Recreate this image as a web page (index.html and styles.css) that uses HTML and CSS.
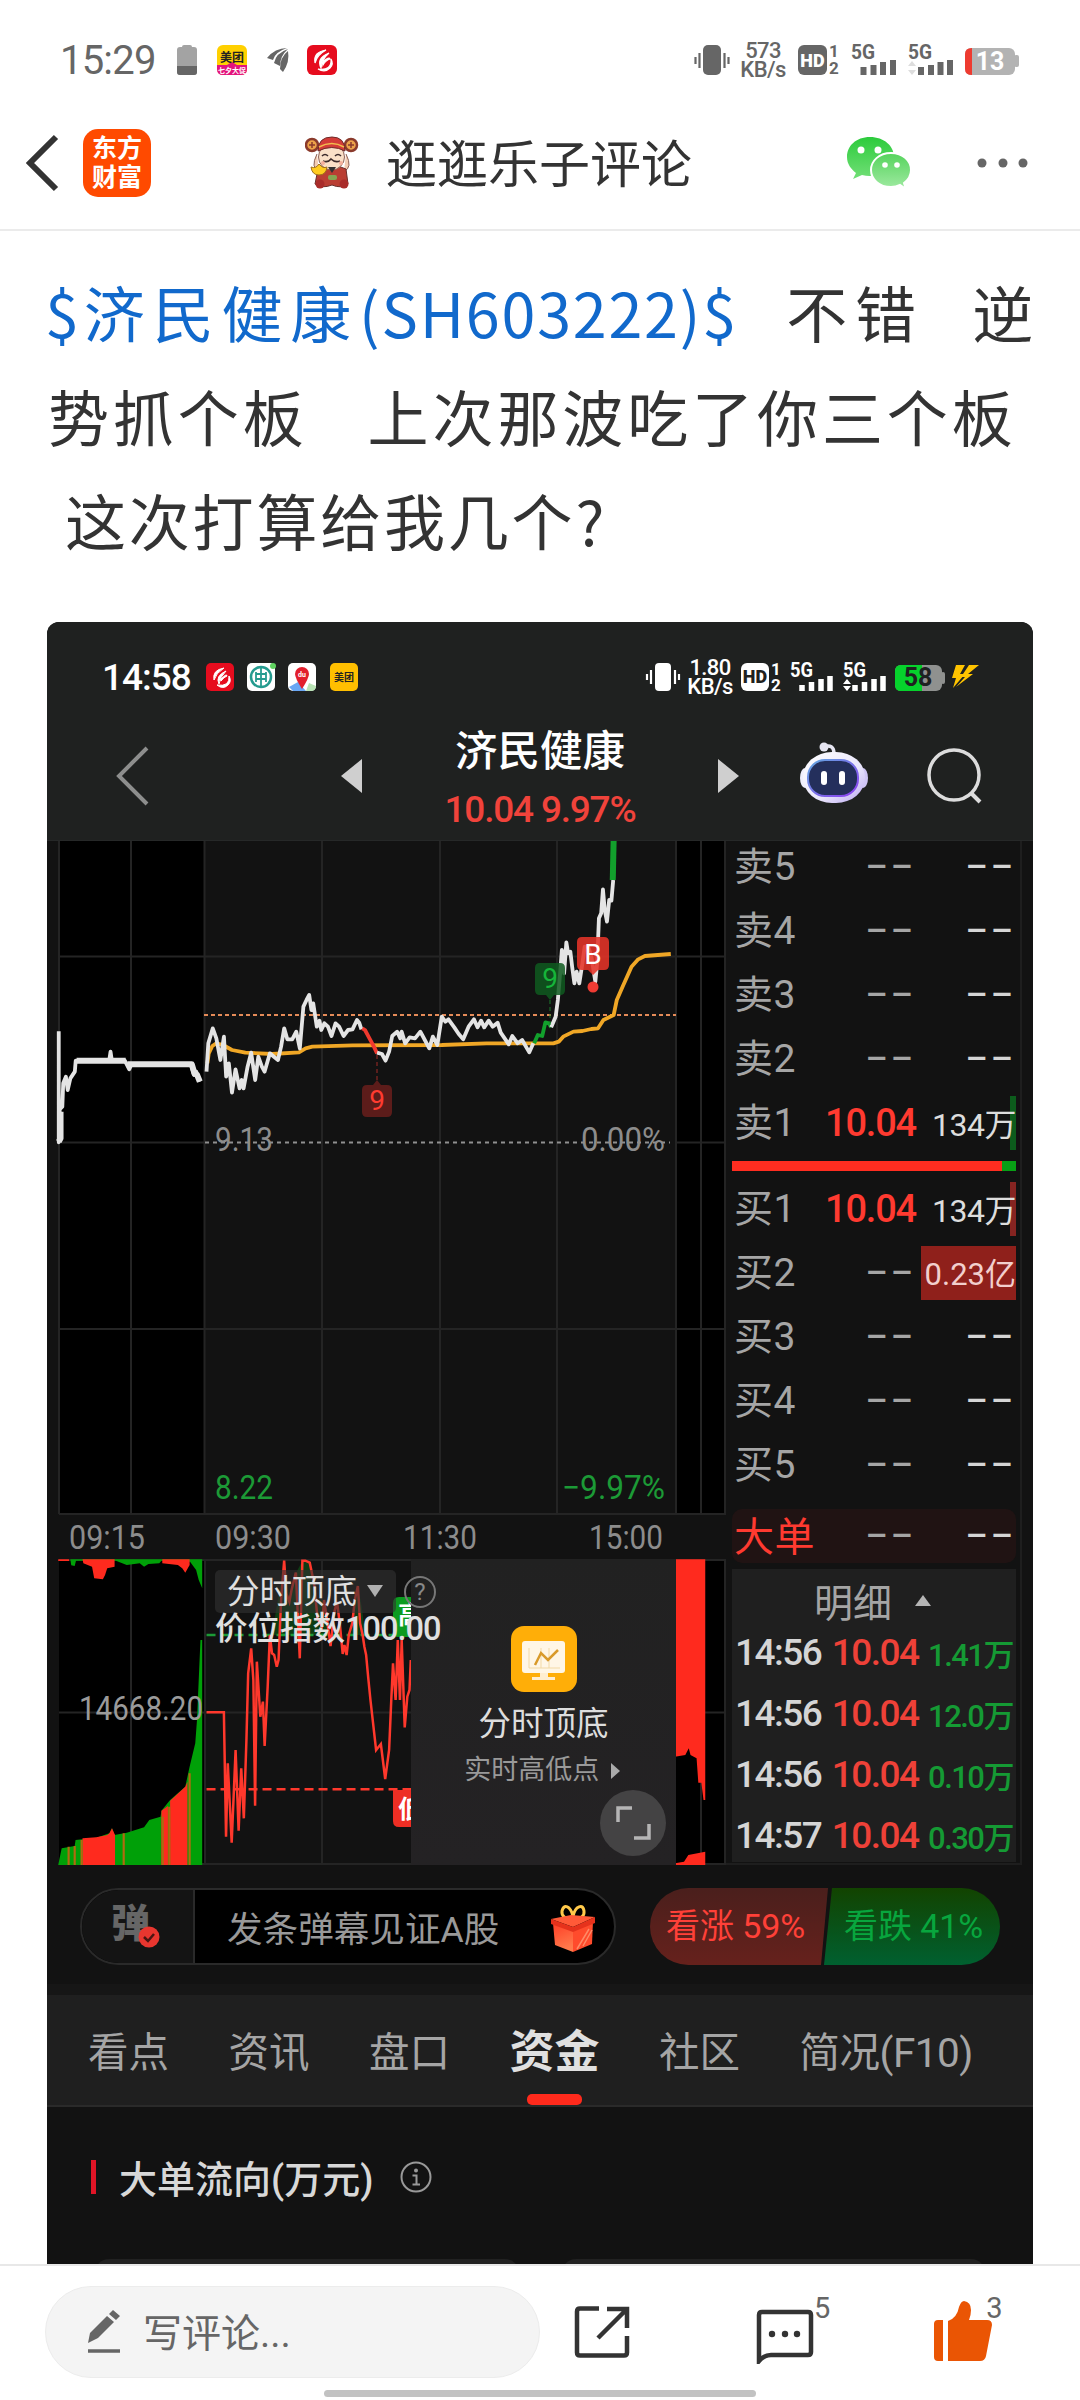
FILE: index.html
```html
<!DOCTYPE html>
<html lang="zh-CN">

<head>
    <meta charset="UTF-8">
    <meta name="viewport" content="width=device-width, initial-scale=1.0">
    <title>逛逛乐子评论</title>

    <link rel="stylesheet" href="styles.css">
</head>

<body>

    <div class="statusbar">
        <span class="clock">15:29</span>
        <svg class="notif" width="162" height="32" viewBox="0 0 162 32">
            <rect x="0" y="3" width="20" height="28" rx="3" fill="#a3a3a3" />
            <rect x="5" y="1" width="10" height="5" rx="2" fill="#a3a3a3" />
            <path d="M0 22h20v6q0 3-3 3H3q-3 0-3-3z" fill="#666" />
            <rect x="40" y="1" width="30" height="30" rx="6" fill="#ffd000" />
            <path d="M40 21h10l5-3 5 3h10v4q0 6-6 6H46q-6 0-6-6z" fill="#e3147c" />
            <text x="55" y="18" class="mini" fill="#222">美团</text>
            <text x="55" y="29" class="tiny" fill="#fff">七夕大促</text>
            <path d="M90 14Q98 4 110 4Q98 8 96 16zM97 19Q99 9 111 5Q103 12 103 22zM103 25Q103 13 111 7Q113 18 106 28z" fill="#666" />
            <rect x="130" y="1" width="30" height="30" rx="6" fill="#e60c1e" />
            <path d="M149 6Q136 8 138 19Q140 11 149 6zM152 9Q139 14 144 24Q145 15 152 9zM146 18q6-6 7-3q-4 1-7 6zM154 15Q155 27 141 25Q148 29 153 24Q157 20 154 15z" fill="#fff" stroke="#fff" stroke-width="1.200" />
        </svg>
        <div class="signals">
            <svg width="36" height="32" viewBox="0 0 36 32">
                <rect x="9" y="1" width="18" height="30" rx="5" fill="#666" />
                <path d="M1.500 13v7M5.500 9v15M30.500 9v15M34.500 13v7" stroke="#666" stroke-width="2.200" />
            </svg>
            <span class="speed">573<br>KB/s</span>
            <svg width="44" height="32" viewBox="0 0 44 32">
                <rect x="1" y="1" width="29" height="30" rx="6" fill="#666" />
                <text x="15.500" y="22.500" class="hd" fill="#fff">HD</text>
                <text x="37" y="13" class="simno" fill="#666">1</text>
                <text x="37" y="30" class="simno" fill="#666">2</text>
            </svg>
            <svg width="46" height="32" viewBox="0 0 46 32">
                <text x="0" y="15" class="g5" textLength="24" lengthAdjust="spacingAndGlyphs" fill="#666">5G</text>
                <path d="M12.500 31v-8M22.500 31v-10M32 31v-13M42 31v-15" stroke="#666" stroke-width="6" />
            </svg>
            <svg width="46" height="32" viewBox="0 0 46 32">
                <text x="0" y="15" class="g5" textLength="24" lengthAdjust="spacingAndGlyphs" fill="#666">5G</text>
                <path d="M4 17l4 5H0zM4 31l4-5H0z" fill="#ddd" />
                <path d="M13 31v-8M23 31v-10M32.500 31v-13M42 31v-15" stroke="#666" stroke-width="6" />
            </svg>
            <svg width="56" height="32" viewBox="0 0 56 32">
                <rect x="1" y="4" width="50" height="27" rx="6" fill="#b3b3b3" />
                <rect x="50" y="11" width="5" height="12" rx="2" fill="#b3b3b3" />
                <path d="M8 4v27q-7 0-7-6V10q0-6 7-6z" fill="#ee3b30" />
                <text x="26" y="26" class="batt" fill="#fff">13</text>
            </svg>
        </div>
    </div>

    <div class="header">
        <svg class="back" width="34" height="58" viewBox="0 0 34 58">
            <path d="M30 3L4 29l26 26" fill="none" stroke="#333" stroke-width="6" />
        </svg>
        <div class="logo">东方<br>财富</div>
        <svg class="mascot" width="54" height="54" viewBox="0 0 54 54">
            <g fill="#eda34a" stroke="#8a3a2c" stroke-width="2.500">
                <circle cx="7" cy="9" r="6" />
                <circle cx="46" cy="9" r="6" />
            </g>
            <path d="M4 9h6M7 6v6M43 9h6M46 6v6" stroke="#8a3a2c" stroke-width="1.500" />
            <path d="M12 18Q5 32 14 35M41 18Q48 32 39 35" fill="#f3cdb4" stroke="#8d6257" />
            <path d="M13 33Q27 26 41 33L43 48Q36 53 27 49Q17 53 10 48z" fill="#ba3e33" stroke="#69302c" />
            <circle cx="26.500" cy="21" r="13" fill="#fae0c7" stroke="#8d6257" />
            <path d="M13 15Q13 1 27 1Q40 1 40 15Q27 8 13 15z" fill="#d33c38" stroke="#6e2a28" />
            <path d="M14 11Q27 4 39 11" fill="none" stroke="#f2bd4d" stroke-width="1.500" />
            <path d="M17 20q3-3 6 0M30 20q3-3 6 0M18 25q5 2 8-2q4 4 9 2" fill="none" stroke="#3b2a2a" stroke-width="1.600" />
            <circle cx="18" cy="27" r="2" fill="#f5b09c" />
            <circle cx="36" cy="27" r="2" fill="#f5b09c" />
            <path d="M23 31h8l-4 6z" fill="#333" />
            <path d="M6 31q5 2 8-3q4 5 8 3q-1 8-8 8t-8-8z" fill="#ffcc20" stroke="#a1701b" />
            <rect x="23" y="39" width="9" height="5" rx="2" fill="#86a552" />
            <circle cx="15" cy="48" r="4.500" fill="#a92c2a" />
            <circle cx="39" cy="48" r="4.500" fill="#a92c2a" />
        </svg>
        <span class="title">逛逛乐子评论</span>
        <svg class="wechat" width="66" height="54" viewBox="0 0 66 54">
            <defs>
                <linearGradient id="wx1" x2="0" y2="1">
                    <stop offset="0" stop-color="#2ccb3c" />
                    <stop offset="1" stop-color="#72df77" />
                </linearGradient>
                <linearGradient id="wx2" x2="0" y2="1">
                    <stop offset="0" stop-color="#55d35c" />
                    <stop offset="1" stop-color="#a0eaa2" />
                </linearGradient>
            </defs>
            <path d="M24 1C10 1 1 10 1 21c0 7 4 12 9 16l-3 6 9-4q8 2 14 0c11-2 18-9 18-18C48 10 38 1 24 1z" fill="url(#wx1)" />
            <path d="M45 17C33 17 25 25 25 34s8 17 20 17q5 0 9-2l6 4-2-6c4-3 7-8 7-13 0-9-8-17-20-17z" fill="url(#wx2)" stroke="#fff" stroke-width="2" />
            <g fill="#fff">
                <circle cx="15" cy="14" r="3.500" />
                <circle cx="32" cy="14" r="3.500" />
                <circle cx="39" cy="29" r="2.800" />
                <circle cx="51" cy="29" r="2.800" />
            </g>
        </svg>
        <svg class="more" width="54" height="12" viewBox="0 0 54 12">
            <g fill="#666">
                <circle cx="7" cy="6" r="4.500" />
                <circle cx="28" cy="6" r="4.500" />
                <circle cx="48" cy="6" r="4.500" />
            </g>
        </svg>
    </div>

    <div class="post">
        <p class="line justified">
            <a class="stock"><span class="sign">$</span><span class="wide">济民健康</span>(SH603222)$</a>
            <span class="wide">不错</span>
            <span>逆</span>
        </p>
        <p class="line">势抓个板<span class="gap"></span>上次那波吃了你三个板</p>
        <p class="line indent">这次打算给我几个?</p>
    </div>

    <div class="shot">
        <div class="shot-status">
            <span class="clock">14:58</span>
            <svg class="notif" width="156" height="30" viewBox="0 0 156 30">
                <rect x="1" y="1" width="28" height="28" rx="5" fill="#e60c1e" />
                <path d="M19 6Q7 8 9 18Q11 11 19 6zM21 9Q10 14 14 22Q15 15 21 9zM16 17q6-6 6-3q-3 1-6 5zM24 14Q25 25 12 23Q18 28 23 23Q27 19 24 14z" fill="#fff" stroke="#fff" />
                <rect x="42" y="1" width="28" height="28" rx="5" fill="#fff" />
                <circle cx="56" cy="15" r="10" fill="none" stroke="#259b8f" stroke-width="2.500" />
                <path d="M56 5v20M51 10v10M61 10v10M51 12h10M51 17h10" stroke="#259b8f" stroke-width="1.800" />
                <circle cx="68" cy="4" r="3" fill="#5fd25f" />
                <rect x="83" y="1" width="28" height="28" rx="5" fill="#fff" />
                <path d="M84 25l9-5 8 9H88z" fill="#6aa7f4" />
                <path d="M101 29l3-8 7 3q0 5-5 5z" fill="#b9e3b5" />
                <path d="M97 27Q90 16 90 12a7 7 0 0 1 14 0Q104 16 97 27z" fill="#e21f2d" />
                <text x="97" y="15" class="tiny" fill="#fff">du</text>
                <rect x="125" y="1" width="28" height="28" rx="5" fill="#ffbf00" />
                <text x="139" y="19" class="mini small" fill="#222">美团</text>
            </svg>
            <div class="signals">
                <svg width="36" height="32" viewBox="0 0 36 32">
                    <rect x="10" y="2" width="16" height="28" rx="4" fill="#fff" />
                    <path d="M2 13v6M6 9v14M30 9v14M34 13v6" stroke="#fff" stroke-width="2.200" />
                </svg>
                <span class="speed">1.80<br>KB/s</span>
                <svg width="44" height="32" viewBox="0 0 44 32">
                    <rect x="1" y="2" width="28" height="28" rx="6" fill="#fff" />
                    <text x="15" y="22" class="hd" fill="#1f2120">HD</text>
                    <text x="36" y="14" class="simno" fill="#fff">1</text>
                    <text x="36" y="30" class="simno" fill="#fff">2</text>
                </svg>
                <svg width="46" height="32" viewBox="0 0 46 32">
                    <text x="0" y="16" class="g5" textLength="23" lengthAdjust="spacingAndGlyphs" fill="#fff">5G</text>
                    <path d="M12 30v-6M21.500 30v-9M31 30v-12M40 30v-15" stroke="#fff" stroke-width="5.500" />
                </svg>
                <svg width="46" height="32" viewBox="0 0 46 32">
                    <text x="0" y="16" class="g5" textLength="23" lengthAdjust="spacingAndGlyphs" fill="#fff">5G</text>
                    <path d="M4 18l4 5H0zM4 30l4-5H0z" fill="#fff" />
                    <path d="M12 30v-6M21.500 30v-9M31 30v-12M40 30v-15" stroke="#fff" stroke-width="5.500" />
                </svg>
                <svg width="88" height="32" viewBox="0 0 88 32">
                    <rect x="0" y="4" width="47" height="26" rx="6" fill="#8f918f" />
                    <rect x="46" y="11" width="4" height="12" rx="2" fill="#8f918f" />
                    <path d="M6 4h21v26H6q-6 0-6-6V10q0-6 6-6z" fill="#06d22c" />
                    <text x="23" y="25" class="batt" fill="#1f2120">58</text>
                    <path d="M61 4h9l-5 9h5L58 27l3-10h-4zM74 4h10L73 13h5L61 26l9-10h-4z" fill="#ffc400" />
                </svg>
            </div>
        </div>

        <div class="stock-head">
            <svg class="chev" width="36" height="60" viewBox="0 0 36 60">
                <path d="M32 2L4 30l28 28" fill="none" stroke="#8d8e8d" stroke-width="4" />
            </svg>
            <div class="tri left"></div>
            <div class="names">
                <span class="name">济民健康</span>
                <span class="quote">10.04 9.97%</span>
            </div>
            <div class="tri right"></div>
            <svg class="robot" width="70" height="66" viewBox="0 0 70 66">
                <defs>
                    <linearGradient id="rb" x2="1" y2="1">
                        <stop offset="0" stop-color="#fff" />
                        <stop offset="0.600" stop-color="#e9e6fb" />
                        <stop offset="1" stop-color="#b9a6f2" />
                    </linearGradient>
                    <linearGradient id="rbs" x2="1" y2="1">
                        <stop offset="0" stop-color="#64a8e0" />
                        <stop offset="1" stop-color="#8a3df0" />
                    </linearGradient>
                </defs>
                <path d="M24 7Q35 3 35 14" fill="none" stroke="#e6e6f2" stroke-width="3.500" />
                <circle cx="25" cy="7" r="4.500" fill="#e6e6f2" />
                <ellipse cx="6" cy="38" rx="5" ry="10" fill="#efeffc" />
                <ellipse cx="64" cy="38" rx="5" ry="10" fill="#cfc5f5" />
                <rect x="4" y="12" width="62" height="51" rx="29" ry="25" fill="url(#rb)" />
                <rect x="9" y="20" width="50" height="36" rx="17" fill="#242f5c" stroke="url(#rbs)" stroke-width="2" />
                <rect x="22" y="31" width="6" height="14" rx="3" fill="#fff" />
                <rect x="40" y="31" width="6" height="14" rx="3" fill="#fff" />
            </svg>
            <svg class="search" width="60" height="60" viewBox="0 0 60 60">
                <circle cx="28" cy="29" r="25" fill="none" stroke="#dcdcdc" stroke-width="3.500" />
                <path d="M45 47l9 9" stroke="#dcdcdc" stroke-width="4" />
            </svg>
        </div>

        <div class="market">
            <div class="charts">
                <svg class="chart" width="679" height="718" viewBox="47 841 679 718">
                    <path d="M59 841h145v673H59zM676 841h50v673h-50z" fill="#000" />
                    <path d="M59 841v673M131 841v673M204.500 841v673M322 841v673M440 841v673M557 841v673M676 841v673M701 841v673M725 841v673M59 956.500h667M59 1142.500h145M676 1142.500h50M59 1329h667M59 1514h667" fill="none" stroke="#242424" stroke-width="2" />
                    <path d="M205 1142.500h465" stroke="#909090" stroke-width="2" stroke-dasharray="4 4" />
                    <path d="M204 1015h472" stroke="#e58b58" stroke-width="2" stroke-dasharray="4 3" />

                    <!-- intraday curves -->
                    <svg x="40" y="830" width="700" height="360" viewBox="0 0 1568 1080" preserveAspectRatio="none">
                        <g class="curve">
                            <polyline stroke="#f0a726" points="375,700 378,670 386,648 395,640 410,645 430,660 460,668 520,672 580,667 595,655 610,650 700,646 900,645 1000,640 1150,640 1162,635 1172,620 1195,605 1215,603 1235,597 1250,595 1262,570 1285,555 1292,510 1305,470 1315,440 1325,410 1340,388 1355,378 1413,372" />
                            <polyline stroke="#e4e4e4" points="42,604 42,937 46,925 44,838 50,830 52,760 58,740 62,780 68,745 78,725 80,692 155,692 158,665 161,692 190,692 200,718 205,703 338,703 345,735 350,725 358,755" />
                            <polyline class="thick" stroke="#e4e4e4" points="82,692 192,692" />
                            <polyline class="thick" stroke="#e4e4e4" points="196,703 340,703 346,730 352,735 358,755" />
                            <polyline class="thick" stroke="#e4e4e4" points="42,935 46,925 46,845" />
                            <polyline stroke="#e4e4e4" points="373,725 377,640 387,595 395,625 404,690 412,620 417,740 423,700 430,788 438,718 447,775 452,750 456,775 465,710 473,668 482,750 489,680 497,710 503,725 515,670 524,680 533,690 540,650 547,595 554,628 565,628 574,605 582,655 590,530 597,510 603,495 608,540 612,520 620,590 626,572 630,600 637,580 645,590 653,618 662,580 670,590 680,618 690,600 700,598 710,570 715,578 720,598" />
                            <polyline stroke="#f0392e" class="thin" points="722,595 728,600 738,625 748,650 755,670" />
                            <polyline stroke="#e4e4e4" points="755,668 766,672 774,692 782,665 789,618 800,605 807,625 810,605 818,640 828,622 840,625 852,605 862,630 872,655 880,620 890,645 900,560 908,575 915,568 928,592 938,612 948,628 960,590 972,568 980,592 988,572 995,592 1005,572 1014,590 1025,578 1032,608 1050,643 1058,618 1070,640 1080,630 1096,667 1105,640" />
                            <polyline stroke="#12a02c" points="1107,640 1115,615 1125,618 1132,577 1140,580 1145,592" />
                            <polyline stroke="#e4e4e4" points="1145,592 1155,560 1160,510 1165,430 1169,360 1174,430 1179,337 1183,370 1188,365 1192,410 1197,460 1202,425 1208,460 1215,400 1220,350 1228,350 1235,380 1244,455 1248,400 1252,265 1257,250 1261,178 1265,240 1270,275 1275,210 1280,212 1284,150" />
                            <polyline class="thick" stroke="#12a02c" points="1283,150 1285,25" />
                        </g>
                    </svg>

                    <path d="M377 1055v25" stroke="#a02a26" stroke-dasharray="4 3" />
                    <path d="M367 1085h6l4-5 4 5h6q5 0 5 5v22q0 5-5 5h-20q-5 0-5-5v-22q0-5 5-5z" fill="#5c1c1a" />
                    <text x="377" y="1110" class="mark" fill="#ff3b30">9</text>
                    <path d="M550 1000v27" stroke="#1a7a2c" stroke-dasharray="4 3" />
                    <path d="M540 963h20q5 0 5 5v22q0 5-5 5h-6l-4 5-4-5h-6q-5 0-5-5v-22q0-5 5-5z" fill="#0f5a20" fill-opacity="0.850" />
                    <text x="550" y="988" class="mark" fill="#16b53a">9</text>
                    <path d="M582 937h22q5 0 5 5v23q0 5-5 5h-6l-5 5-5-5h-6q-5 0-5-5v-23q0-5 5-5z" fill="#e53328" fill-opacity="0.880" />
                    <text x="593" y="964" class="mark" fill="#fff">B</text>
                    <circle cx="593" cy="987" r="5.500" fill="#ef3b33" />

                    <g class="axis" fill="#8c8c8c">
                        <text x="215" y="1151" textLength="58" lengthAdjust="spacingAndGlyphs">9.13</text>
                        <text x="581" y="1151" textLength="84" lengthAdjust="spacingAndGlyphs">0.00%</text>
                        <text x="215" y="1499" textLength="58" lengthAdjust="spacingAndGlyphs" fill="#1c9a36">8.22</text>
                        <text x="562" y="1499" textLength="103" lengthAdjust="spacingAndGlyphs" fill="#1c9a36">−9.97%</text>
                        <text x="69" y="1549" textLength="76" lengthAdjust="spacingAndGlyphs">09:15</text>
                        <text x="215" y="1549" textLength="76" lengthAdjust="spacingAndGlyphs">09:30</text>
                        <text x="403" y="1549" textLength="74" lengthAdjust="spacingAndGlyphs">11:30</text>
                        <text x="589" y="1549" textLength="74" lengthAdjust="spacingAndGlyphs">15:00</text>
                    </g>
                </svg>

                <div class="lower">
                    <svg class="chart" width="679" height="306" viewBox="47 1559 679 306">
                        <path d="M59 1559h145v306H59zM676 1559h50v306h-50z" fill="#000" />
                        <path d="M59 1560h667M59 1864h667M59 1712.500h667M131 1559v306M205 1559v306M322 1559v306M701 1559v306M725 1559v306" stroke="#242424" stroke-width="2" />
                        <svg x="40" y="1540" width="680" height="340" viewBox="0 0 1568 1020" preserveAspectRatio="none">
                            <!-- auction volume -->
                            <path fill="#00a008" d="M42 975L50 925 80 918 82 900 130 893 160 880 166 865 172 885 200 878 240 862 252 840 278 830 280 812 300 780 335 740 345 680 358 610 362 540 370 300 374 300V975z" />
                            <path fill="#ff2a1e" d="M98 975V895L130 892 155 885 160 880 166 865 173 885V975zM280 975V812L295 798V975zM300 975V782L335 740 340 725V975z" />
                            <path stroke="#b06a10" stroke-width="5" d="M66 920v55M80 918v57M96 900v75M193 880v95M283 830v145M298 800v175M345 700v275" />
                            <path fill="#00a008" d="M70 58H374V145L366 120 360 90 346 65 320 65 280 62 275 70 250 72 240 80 230 70 200 75 175 62H83L80 78 72 76z" />
                            <path fill="#ff2a1e" d="M42 58h25v5H42zM98 58H172V80L155 85 150 105 145 118 125 115 120 80 100 70zM282 58H345V75L335 98 328 85 318 75 282 70z" />
                            <path fill="#ff2a1e" d="M1464 58H1534V780H1530L1525 728H1518L1514 655 1500 645 1496 625 1488 645 1464 650zM1464 975V970L1485 965 1495 945 1534 935V975z" />
                            <!-- index line -->
                            <path fill="#0e3c14" d="M535 285L563 62 575 180 590 100 605 62 622 62 640 180 655 180 665 285zM710 285L733 140 742 200 750 285z" />
                            <g class="index" fill="none" stroke="#ff382c">
                                <path d="M384 285h470" stroke="#1c9a36" stroke-dasharray="9 5" />
                                <path d="M384 748h472" stroke-dasharray="9 5" />
                                <polyline points="384,517 424,517 429,890 433,670 442,908 451,630 458,872 464,685 470,835 476,600 480,400 487,325 492,420 496,797 500,365 508,530 514,485 518,618 525,440 530,285 535,340 540,345 546,380 550,360 556,180 563,62 568,160 575,185 580,150 590,98 595,240 599,355 605,62 612,62 622,68 632,130 640,235 650,260 655,180 662,240 670,318 678,220 685,185 692,260 698,342 702,315 707,345 712,285 720,250 726,180 733,138 738,250 744,285 748,320 752,345 757,415 762,480 775,630 786,612 796,717 805,630 810,480 814,370 820,480 825,300 830,480 834,300 841,562 847,470 852,450 855,360" />
                            </g>
                        </svg>
                        <path d="M411 1597h-12q-6 0-6 6v28q0 6 6 6h12z" fill="#0c9b20" />
                        <text x="398" y="1624" class="tag">高</text>
                        <path d="M411 1790h-18v31q0 6 6 6h12z" fill="#ee2e24" />
                        <text x="398" y="1818" class="tag">低</text>
                        <text x="79" y="1720" class="axis" textLength="124" lengthAdjust="spacingAndGlyphs" fill="#9a9a9a">14668.20</text>
                    </svg>
                    <div class="promo">
                        <svg width="66" height="66" viewBox="0 0 66 66">
                            <rect width="66" height="66" rx="13" fill="#ffae08" />
                            <rect x="11" y="15" width="43" height="32" rx="3" fill="#fff6e6" />
                            <path d="M29 47h8v4h7v3H21v-3h8z" fill="#ffeed0" />
                            <path d="M18 22v20h31M30 42V22M38 42V22" fill="none" stroke="#f2d9a6" />
                            <path d="M24 39l6-12 7 7 10-10" fill="none" stroke="#d99a2b" stroke-width="2.500" />
                        </svg>
                        <span class="promo-title">分时顶底</span>
                        <span class="promo-sub">实时高低点 <i></i></span>
                        <svg class="expand" width="66" height="66" viewBox="0 0 66 66">
                            <circle cx="33" cy="33" r="33" fill="#444344" />
                            <path d="M18 32V18h14M34 48h15V34" fill="none" stroke="#b5b5b5" stroke-width="3.500" />
                        </svg>
                    </div>
                    <div class="picker">
                        <span class="picker-name">分时顶底<i></i></span>
                        <svg width="34" height="34" viewBox="0 0 34 34">
                            <circle cx="17" cy="17" r="15" fill="none" stroke="#777" stroke-width="2" />
                            <text x="17" y="25" class="qmark" fill="#888">?</text>
                        </svg>
                        <span class="picker-value">价位指数<b>100.00</b></span>
                    </div>
                </div>
            </div>

            <div class="book">
                <div class="row"><span>卖5</span><em>−−</em><em class="vol">−−</em></div>
                <div class="row"><span>卖4</span><em>−−</em><em class="vol">−−</em></div>
                <div class="row"><span>卖3</span><em>−−</em><em class="vol">−−</em></div>
                <div class="row"><span>卖2</span><em>−−</em><em class="vol">−−</em></div>
                <div class="row sell"><span>卖1</span><b>10.04</b><strong>134万</strong></div>
                <div class="ratio"><i></i></div>
                <div class="row buy"><span>买1</span><b>10.04</b><strong>134万</strong></div>
                <div class="row big"><span>买2</span><em>−−</em><strong>0.23亿</strong></div>
                <div class="row"><span>买3</span><em>−−</em><em class="vol">−−</em></div>
                <div class="row"><span>买4</span><em>−−</em><em class="vol">−−</em></div>
                <div class="row"><span>买5</span><em>−−</em><em class="vol">−−</em></div>
                <div class="row block"><span>大单</span><em>−−</em><em class="vol">−−</em></div>

                <div class="ticks">
                    <div class="ticks-head">明细<i></i></div>
                    <div class="tick"><span>14:56</span><b>10.04</b><em>1.41万</em></div>
                    <div class="tick"><span>14:56</span><b>10.04</b><em>12.0万</em></div>
                    <div class="tick"><span>14:56</span><b>10.04</b><em>0.10万</em></div>
                    <div class="tick"><span>14:57</span><b>10.04</b><em>0.30万</em></div>
                </div>
            </div>
        </div>

        <div class="danmu">
            <div class="danmu-pill">
                <div class="danmu-icon">弹
                    <svg width="22" height="22" viewBox="0 0 22 22">
                        <circle cx="11" cy="11" r="10.500" fill="#e8362f" />
                        <path d="M6 11l4 4 6-7" fill="none" stroke="#4a1512" stroke-width="2.500" />
                    </svg>
                </div>
                <div class="danmu-text">发条弹幕见证A股</div>
                <svg class="gift" width="48" height="50" viewBox="0 0 48 50">
                    <defs>
                        <linearGradient id="gf" x2="0.300" y2="1">
                            <stop offset="0" stop-color="#ff3d25" />
                            <stop offset="1" stop-color="#ff7a4c" />
                        </linearGradient>
                    </defs>
                    <path d="M24 15Q12 15 13 7Q15 0 20 4Q24 8 24 15Q24 8 28 4Q34 0 35 7Q36 15 24 15z" fill="none" stroke="#ffc94a" stroke-width="3" />
                    <path d="M4 19l20 6v23L6 41z" fill="url(#gf)" />
                    <path d="M24 25l20-8-1 23-19 8z" fill="#ff4b2c" />
                    <path d="M2 15l20-4 24 2-22 10z" fill="#ff5a38" />
                    <path d="M2 15l22 8v5L2 20zM46 13L24 23v5l22-9z" fill="#e6321c" />
                    <path d="M28 45l12-20M34 42l9-16" stroke="#ff8a66" stroke-width="1.500" />
                </svg>
            </div>
            <div class="vote">
                <div class="up">看涨 59%</div>
                <div class="down">看跌 41%</div>
            </div>
        </div>

        <div class="tabs">
            <span>看点</span>
            <span>资讯</span>
            <span>盘口</span>
            <span class="active">资金</span>
            <span>社区</span>
            <span class="profile">简况(F10)</span>
        </div>

        <div class="section">
            <span class="section-title">大单流向(万元)</span>
            <svg width="32" height="32" viewBox="0 0 32 32">
                <circle cx="16" cy="16" r="14.500" fill="none" stroke="#999" stroke-width="2" />
                <circle cx="16" cy="9.500" r="2" fill="#999" />
                <path d="M12.500 14.500h4v9M12.500 23.500h7.500" fill="none" stroke="#999" stroke-width="2" />
            </svg>
        </div>
        <div class="cards">
            <div></div>
            <div></div>
        </div>
    </div>

    <div class="bottombar">
        <div class="comment-box">
            <svg width="34" height="46" viewBox="0 0 34 46">
                <path d="M1 34l2-10L20 7l7 6L11 29zM22 5l4-4 7 6-4 4z" fill="#666" />
                <path d="M1 42h32" stroke="#666" stroke-width="3.500" />
            </svg>
            <span>写评论...</span>
        </div>
        <svg class="share" width="56" height="54" viewBox="0 0 56 54">
            <path d="M25 3.500H6q-3 0-3 3v41q0 3 3 3h44q3 0 3-3V31M33 4h20v19M53 4L24 33" fill="none" stroke="#333" stroke-width="4.500" />
        </svg>
        <div class="action comments">
            <svg width="58" height="56" viewBox="0 0 58 56">
                <path d="M6 4h46q3 0 3 3v37q0 3-3 3H15q-7 0-12 6V7q0-3 3-3z" fill="none" stroke="#333" stroke-width="4.500" />
                <g fill="#333">
                    <circle cx="16" cy="26" r="3.200" />
                    <circle cx="29" cy="26" r="3.200" />
                    <circle cx="41" cy="26" r="3.200" />
                </g>
            </svg>
            <sup>5</sup>
        </div>
        <div class="action likes">
            <svg width="60" height="62" viewBox="0 0 60 62">
                <path d="M10 20v41H5q-4 0-4-4V24q0-4 4-4zM15 61V21q9-3 11-14Q28 1 31 1q7 1 7 9 0 5-2 10h18q5 0 5 5l-6 31q-1 5-6 5z" fill="#ea5504" />
            </svg>
            <sup>3</sup>
        </div>
        <div class="home-indicator"></div>
    </div>

</body>

</html>
```
FILE: styles.css
```css
html,
body {
    margin: 0;
    padding: 0;
    box-sizing: border-box;
    background: #fff;
}

*,
*::before,
*::after {
    box-sizing: inherit;
}

body {
    width: 1080px;
    height: 2400px;
    overflow: hidden;
    display: flex;
    flex-direction: column;
    font-family: Roboto, "Noto Sans CJK SC", sans-serif;
    color: #333;
}

svg {
    display: block;
    flex-shrink: 0;
}

em,
i {
    font-style: normal;
}

/* phone status bars */
.statusbar {
    height: 120px;
    padding: 0 60px;
    display: flex;
    align-items: center;
    color: #666;

    .clock {
        width: 117px;
        font-size: 40px;
        letter-spacing: -0.8px;
    }
}

.signals {
    margin-left: auto;
    display: flex;
    align-items: center;
    gap: 10.5px;

    svg {
        overflow: visible;
    }
}

.speed {
    width: 46px;
    font-size: 22px;
    line-height: 19px;
    font-weight: 500;
    text-align: center;
    letter-spacing: -0.6px;
}

svg text {
    font-family: Roboto, "Noto Sans CJK SC", sans-serif;
}

.mini,
.tiny,
.hd,
.simno,
.batt,
.mark,
.qmark {
    text-anchor: middle;
}

.mini {
    font-size: 12px;
    font-weight: 700;

    &.small {
        font-size: 10px;
    }
}

.tiny {
    font-size: 7px;
    font-weight: 700;
}

.hd {
    font-size: 18px;
    font-weight: 900;
}

.simno {
    font-size: 17px;
    font-weight: 700;
}

.g5 {
    font-size: 20px;
    font-weight: 700;
}

.batt {
    font-size: 25px;
    font-weight: 700;
}

.header {
    height: 111px;
    padding: 0 51px 23px 26px;
    display: flex;
    align-items: center;
    border-bottom: 2px solid #ebebeb;

    .logo {
        width: 68px;
        height: 68px;
        margin-left: 23px;
        padding-top: 5px;
        border-radius: 15px;
        background: #ff4a00;
        color: #fff;
        font-size: 25px;
        line-height: 29px;
        font-weight: 700;
        text-align: center;
    }

    .mascot {
        margin-left: 154px;
    }

    .title {
        margin-left: 27px;
        font-size: 51px;
        line-height: 60px;
        padding-top: 5px;
    }

    .wechat {
        margin-left: auto;
        margin-right: 63px;
    }
}

/* post body */
.post {
    height: 391px;
    padding: 29px 48px 0;
    font-family: "Noto Sans CJK SC", sans-serif;
    font-size: 61px;
    line-height: 104px;

    .line {
        margin: 0;
        letter-spacing: 3.9px;
        white-space: nowrap;
    }

    .justified {
        display: flex;
        justify-content: space-between;
        margin: 0 -3px 0 -3px;
        letter-spacing: 1.8px;
    }

    .stock {
        color: #1169cc;
    }

    .sign {
        letter-spacing: 5px;
    }

    .wide {
        letter-spacing: 7.8px;
    }

    .gap {
        display: inline-block;
        width: 60px;
    }

    .indent {
        padding-left: 17px;
        letter-spacing: 2.8px;
    }
}

/* embedded quote page */
.shot {
    width: 986px;
    height: 1642px;
    margin-left: 47px;
    border-radius: 12px 12px 0 0;
    background: #121212;
    overflow: hidden;
    flex-shrink: 0;
}

.shot-status {
    height: 110px;
    padding: 0 50px 0 55px;
    display: flex;
    align-items: center;
    background: #1f2120;
    color: #fff;

    .clock {
        width: 103px;
        font-size: 37px;
        font-weight: 500;
        letter-spacing: -1px;
    }

    .signals {
        gap: 6.5px;
    }
}

.stock-head {
    height: 109px;
    display: flex;
    align-items: flex-start;
    background: #1f2120;
    border-bottom: 1px solid #262828;

    .chev {
        margin: 14px 0 0 68px;
    }

    .tri {
        height: 34px;
        margin-top: 27px;
        border: 17px solid transparent;

        &.left {
            margin-left: 173px;
            border-right: 21px solid #cfcfcf;
        }

        &.right {
            border-left: 21px solid #cfcfcf;
        }
    }

    .names {
        width: 356px;
        height: 108px;
        display: flex;
        flex-direction: column;
        align-items: center;
    }

    .name {
        color: #fff;
        font-size: 42.5px;
        line-height: 40px;
        font-weight: 500;
    }

    .quote {
        margin-top: 17px;
        color: #f0433b;
        font-size: 37px;
        line-height: 42px;
        font-weight: 500;
        letter-spacing: -1.2px;
    }

    .robot {
        margin: 8px 0 0 43px;
    }

    .search {
        margin: 14px 0 0 57px;
    }
}

.market {
    display: flex;
    height: 1024px;
}

.charts {
    width: 679px;
}

.curve polyline {
    fill: none;
    stroke-width: 3.8px;
    stroke-linejoin: round;
    vector-effect: non-scaling-stroke;
}

.curve .thick {
    stroke-width: 6px;
}

.index * {
    stroke-width: 2.5px;
    vector-effect: non-scaling-stroke;
}

.mark {
    font-size: 28px;
}

.axis,
.axis text {
    font-size: 33px;
}

.tag {
    font-size: 25px;
    font-weight: 700;
    fill: #fff;
}

.lower {
    position: relative;
}

.promo {
    position: absolute;
    top: 0;
    left: 364px;
    width: 265px;
    height: 306px;
    padding-top: 67px;
    display: flex;
    flex-direction: column;
    align-items: center;
    background: linear-gradient(#212121, #242224);

    .promo-title {
        margin-top: 9px;
        color: #ddd;
        font-size: 32.5px;
        line-height: 46px;
    }

    .promo-sub {
        color: #999;
        font-size: 27px;
        line-height: 46px;
        margin-left: -3px;
    }

    .promo-sub i {
        display: inline-block;
        margin-left: 5px;
        border: 8px solid transparent;
        border-left: 9px solid #aaa;
        border-right: 0;
    }

    .expand {
        position: absolute;
        right: 10px;
        bottom: 9px;
    }
}

.picker {
    position: absolute;
    top: 11px;
    left: 168px;
    width: 240px;
    display: flex;
    flex-wrap: wrap;
    align-items: center;
    color: #e0e0e0;

    .picker-name {
        width: 181px;
        height: 43px;
        margin-right: 7px;
        padding: 2px 0 0 12px;
        border-radius: 5px;
        background: rgba(50, 50, 50, 0.6);
        font-size: 32.5px;
        line-height: 41px;
    }

    .picker-name i {
        display: inline-block;
        margin-left: 10px;
        border: 8px solid transparent;
        border-top: 12px solid #b0b0b0;
        border-bottom: 0;
        vertical-align: 6px;
    }

    .picker-value {
        font-size: 32.5px;
        line-height: 32px;
        font-weight: 500;
        white-space: nowrap;
    }

    .picker-value b {
        font-weight: 500;
        letter-spacing: -1px;
    }
}

.qmark {
    font-size: 24px;
}

/* order book */
.book {
    width: 296px;
    padding: 0 4px 0 6px;
    border-right: 2px solid #1e1e1e;
    border-bottom: 2px solid #1e1e1e;

    .row {
        height: 64px;
        padding: 0 1px 0 2px;
        display: flex;
        align-items: center;
        font-size: 39px;
        line-height: 54px;
        color: #a5a5a5;
    }

    .row:first-child {
        height: 58px;
        padding-bottom: 7px;
    }

    .row span {
        width: 91px;
        letter-spacing: 0.5px;
        white-space: nowrap;
    }

    .row em {
        width: 90px;
        font-size: 42px;
        letter-spacing: 1.2px;
        text-align: right;
    }

    .row .vol {
        width: auto;
        flex: 1;
        color: #d5d5d5;
    }

    .row b {
        width: 92px;
        color: #ff3a30;
        font-size: 38px;
        font-weight: 500;
        letter-spacing: -1.2px;
    }

    .row strong {
        flex: 1;
        height: 54px;
        padding-top: 2px;
        color: #ddd;
        font-size: 32px;
        line-height: 54px;
        font-weight: 400;
        text-align: right;
        white-space: nowrap;
    }

    .sell,
    .buy {
        padding-right: 0;
    }

    .sell strong {
        background: linear-gradient(#0c5c1c, #0c5c1c) right / 6px 100% no-repeat;
        letter-spacing: -0.5px;
    }

    .buy strong {
        background: linear-gradient(#862421, #862421) right / 6px 100% no-repeat;
        letter-spacing: -0.5px;
    }

    .big {
        padding-right: 0;
    }

    .big em {
        margin-right: 6px;
    }

    .big strong {
        background: #8f201b;
        color: #f2cfcd;
        font-size: 31px;
    }

    .ratio {
        height: 10px;
        margin: 6px 0;
        background: #08a015;

        i {
            display: block;
            width: 270px;
            height: 100%;
            background: #ff2d20;
        }
    }

    .block {
        height: 54px;
        margin-top: 12px;
        border-radius: 10px;
        background: #201313;
    }

    .block span {
        color: #ff3a30;
        font-size: 40px;
        padding-top: 3px;
    }
}

.ticks {
    height: 293px;
    margin-top: 6px;
    background: #1f1f1f;

    .ticks-head {
        height: 53px;
        padding: 9px 0 0 82px;
        display: flex;
        align-items: center;
        gap: 23px;
        color: #a5a5a5;
        font-size: 39px;
    }

    .ticks-head i {
        border: 8px solid transparent;
        border-top: 0;
        border-bottom: 11px solid #b5b5b5;
    }

    .tick {
        height: 61px;
        padding: 0 3px 0 3px;
        display: flex;
        align-items: center;
        justify-content: space-between;
        font-size: 37px;
        letter-spacing: -1.5px;
        color: #d5d5d5;
        font-weight: 500;
    }

    .tick b {
        color: #ee4138;
        font-weight: 500;
        margin-left: 4px;
    }

    .tick em {
        width: 88px;
        display: flex;
        justify-content: flex-end;
        color: #159a34;
        font-size: 31px;
    }
}

.danmu {
    height: 119px;
    padding: 23px 33px 0;
    display: flex;
    justify-content: space-between;
}

.danmu-pill {
    width: 536px;
    height: 77px;
    display: flex;
    align-items: center;
    border: 2px solid #2a2a2a;
    border-radius: 39px;
    background: #000;
    overflow: hidden;

    .danmu-icon {
        position: relative;
        width: 113px;
        height: 100%;
        padding-left: 29px;
        border-right: 2px solid #2a2a2a;
        background: #141414;
        color: #666;
        font-size: 39px;
        line-height: 68px;
        font-weight: 900;
    }

    .danmu-icon svg {
        position: absolute;
        left: 56px;
        top: 36px;
    }

    .danmu-text {
        width: 319px;
        padding-left: 32px;
        color: #999;
        font-size: 35.6px;
        white-space: nowrap;
    }

    .gift {
        margin: 4px 0 0 35px;
    }
}

.vote {
    width: 350px;
    height: 77px;
    display: flex;
    border-radius: 39px;
    overflow: hidden;
    font-size: 34px;
    line-height: 77px;
    letter-spacing: -0.1px;

    .up,
    .down {
        white-space: nowrap;
    }

    .up {
        width: 178px;
        padding-left: 16px;
        background: linear-gradient(#4a1f1c, #66211c);
        color: #ff4038;
        clip-path: polygon(0 0, 100% 0, 171px 100%, 0 100%);
    }

    .down {
        flex: 1;
        margin-left: -4px;
        padding-left: 20px;
        background: linear-gradient(#124300, #006030);
        color: #08a63e;
        clip-path: polygon(8px 0, 100% 0, 100% 100%, 0 100%);
    }
}

.tabs {
    height: 123px;
    padding: 2px 60px 0 41px;
    display: flex;
    justify-content: space-between;
    border-top: 11px solid #161616;
    border-bottom: 2px solid #2a2a2a;
    background: #1f1f1f;
    color: #a5a5a5;
    font-size: 40.5px;
    line-height: 112px;
    white-space: nowrap;

    .active {
        position: relative;
        color: #e0e0e0;
        font-size: 45px;
        font-weight: 700;
    }

    .active::after {
        content: "";
        position: absolute;
        left: 17px;
        bottom: 0;
        width: 55px;
        height: 11px;
        border-radius: 5px;
        background: #ff2a1c;
    }

    .profile {
        letter-spacing: -0.5px;
    }
}

.section {
    height: 152px;
    padding: 0 44px 13px;
    display: flex;
    align-items: center;
    gap: 27px;

    .section-title {
        display: flex;
        align-items: center;
        gap: 23px;
        color: #d8d8d8;
        font-size: 38px;
        font-weight: 500;
    }

    .section-title::before {
        content: "";
        width: 5px;
        height: 34px;
        background: #e01526;
    }
}

.cards {
    display: flex;
    gap: 43px;
    padding: 0 48px;

    div {
        flex: 1;
        height: 60px;
        border-radius: 14px;
        background: #212121;
    }
}

/* comment bar */
.bottombar {
    position: relative;
    height: 136px;
    padding: 20px 45px 0;
    display: flex;
    align-items: flex-start;
    border-top: 2px solid #e8e8e8;
    background: #fff;
    flex-shrink: 0;

    .comment-box {
        width: 495px;
        height: 92px;
        padding-left: 41px;
        display: flex;
        align-items: center;
        gap: 22px;
        border: 1px solid #ececec;
        border-radius: 46px;
        background: #f4f4f4;
        color: #666;
        font-size: 39px;
    }

    .comment-box span {
        padding-bottom: 4px;
    }

    .share {
        margin: 19px 0 0 34px;
    }

    .action {
        display: flex;
        align-items: flex-start;
    }

    .comments {
        margin: 22px 0 0 126px;
    }

    .likes {
        margin: 14px 0 0 103px;
    }

    sup {
        margin-top: -17px;
        color: #666;
        font-size: 29px;
        line-height: 34px;
        font-weight: 400;
        vertical-align: baseline;
    }

    .likes sup {
        margin: -9px 0 0 -7px;
    }

    .home-indicator {
        position: absolute;
        left: 324px;
        bottom: 3px;
        width: 432px;
        height: 7px;
        border-radius: 4px;
        background: #c2c2c2;
    }
}
```
